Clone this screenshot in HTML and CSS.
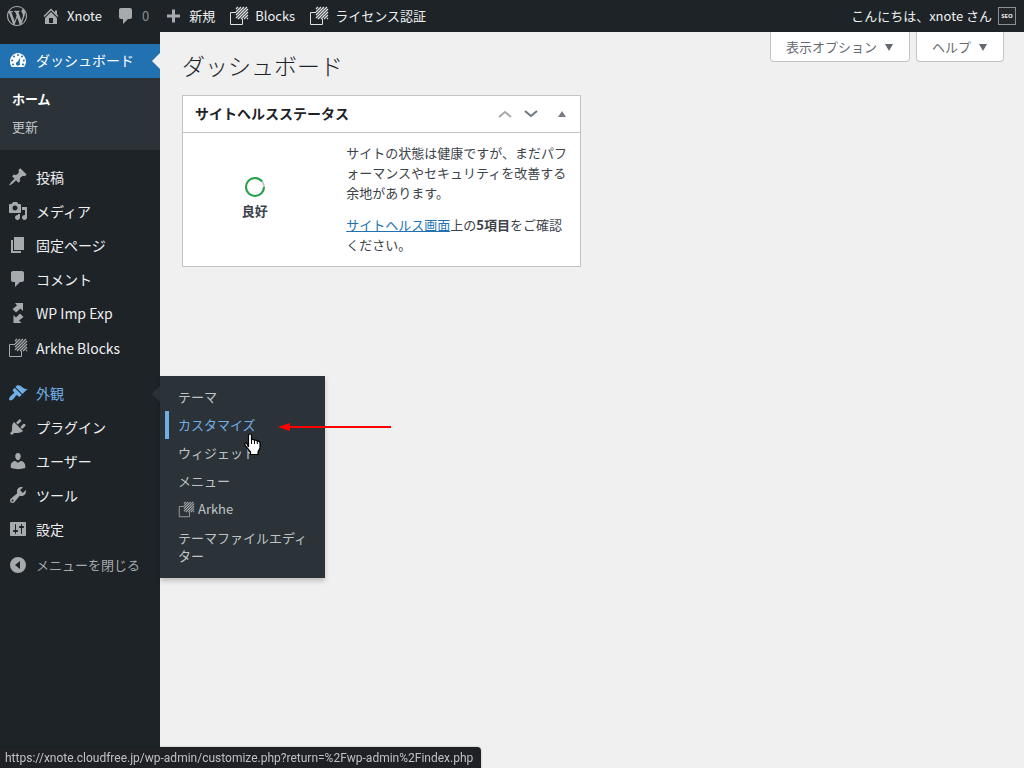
FILE: index.html
```html
<!DOCTYPE html>
<html lang="ja">
<head>
<meta charset="utf-8">
<meta name="viewport" content="width=device-width, initial-scale=1">
<title>ダッシュボード ‹ Xnote — WordPress</title>
<link rel="stylesheet" href="styles.css">
</head>
<body>
<svg class="sprite" aria-hidden="true">
  <defs>
    <symbol id="arkhe" viewBox="0 0 20 20">
      <path d="M7 6.500H1.500v12h12V13" fill="none" stroke="currentColor"/>
      <path d="M7 3l2-2M7 6l5-5M7 9l8-8M7 12L18 1M9 13L19 3M12 13l7-7M15 13l4-4M18 13l1-1" fill="none" stroke="currentColor" stroke-width="1.300"/>
    </symbol>
    <symbol id="comment" viewBox="0 0 20 20"><path d="M5 2h9c1.100 0 2 .9 2 2v7c0 1.100-.9 2-2 2h-2l-5 5v-5H5c-1.100 0-2-.9-2-2V4c0-1.100.9-2 2-2z"/></symbol>
  </defs>
</svg>

<header class="adminbar">
  <nav class="bar-group" aria-label="ツールバー">
    <a class="bar-item" href="#" aria-label="WordPress について"><svg class="icon" viewBox="0 0 20 20"><path d="M20 10c0-5.51-4.49-10-10-10C4.48 0 0 4.490 0 10c0 5.520 4.480 10 10 10 5.510 0 10-4.480 10-10zM7.780 15.370L4.370 6.220c.55-.02 1.170-.08 1.170-.08.5-.06.44-1.130-.06-1.110 0 0-1.450.11-2.370.11-.18 0-.37 0-.58-.01C4.120 2.690 6.870 1.110 10 1.110c2.330 0 4.450.87 6.050 2.340-.68-.11-1.650.39-1.650 1.580 0 .74.45 1.360.9 2.100.35.61.55 1.360.55 2.460 0 1.490-1.400 5-1.400 5l-3.030-8.370c.54-.02.82-.17.82-.17.5-.05.44-1.250-.06-1.220 0 0-1.440.12-2.380.12-.87 0-2.330-.12-2.330-.12-.5-.03-.56 1.200-.06 1.220l.92.08 1.260 3.410zM17.410 10c.24-.64.74-1.870.43-4.250.7 1.290 1.050 2.710 1.050 4.250 0 3.290-1.730 6.240-4.400 7.780.97-2.590 1.940-5.200 2.920-7.780zM6.100 18.090C3.120 16.650 1.110 13.530 1.110 10c0-1.300.23-2.480.72-3.590C3.250 10.300 4.670 14.200 6.100 18.090zm4.030-6.630l2.580 6.980c-.86.29-1.760.45-2.710.45-.79 0-1.570-.11-2.290-.33.81-2.380 1.620-4.740 2.420-7.100z"/></svg></a>
    <a class="bar-item" href="#"><svg class="icon" viewBox="0 0 20 20"><path d="M16 8.500l1.530 1.530-1.060 1.060L10 4.600l-6.470 6.490-1.060-1.060L10 2.500l4 4v-2h2v4zm-6-2.460l6 5.990V18H4v-5.970zM12 17v-5H8v5h4z" fill-rule="evenodd"/></svg>Xnote</a>
    <a class="bar-item bar-comments" href="#"><svg class="icon"><use href="#comment"/></svg>0</a>
    <a class="bar-item" href="#"><svg class="icon" viewBox="0 0 20 20"><path d="M17 8.500v3h-5v5H9v-5H4v-3h5v-5h3v5h5z"/></svg>新規</a>
    <a class="bar-item bar-light" href="#"><svg class="icon"><use href="#arkhe"/></svg>Blocks</a>
    <a class="bar-item bar-light" href="#"><svg class="icon"><use href="#arkhe"/></svg>ライセンス認証</a>
  </nav>
  <a class="bar-item account" href="#">こんにちは、xnote さん
    <svg class="avatar" viewBox="0 0 18 18"><rect x=".5" y=".5" width="17" height="17" fill="#24272a" stroke="#8c8f94"/><text x="9" y="11" text-anchor="middle">SEO</text></svg>
  </a>
</header>

<div class="layout">
  <nav class="sidebar" aria-label="メインメニュー">
    <ul class="menu">
      <li class="menu-item current">
        <a href="#"><svg class="icon" viewBox="0 0 20 20"><path fill-rule="evenodd" d="M3.760 17h12.480A9.300 9.300 0 0 0 18 11.560C18 6.840 14.420 3 10 3S2 6.840 2 11.560c0 2.020.66 3.900 1.760 5.440zM10 4a1 1 0 1 1 0 2 1 1 0 0 1 0-2zM6 5.500a1 1 0 1 1 0 2 1 1 0 0 1 0-2zm8 0a1 1 0 1 1 0 2 1 1 0 0 1 0-2zM4.200 9.500a1 1 0 1 1 0 2 1 1 0 0 1 0-2zm11.600 0a1 1 0 1 1 0 2 1 1 0 0 1 0-2zM12.300 7.500l-.6 5.200a2 2 0 1 1-2.100-.9zM5 13.500a1 1 0 1 1 0 2 1 1 0 0 1 0-2zm10 0a1 1 0 1 1 0 2 1 1 0 0 1 0-2z"/></svg>ダッシュボード</a>
        <ul class="submenu">
          <li><a class="selected" href="#">ホーム</a></li>
          <li><a href="#">更新</a></li>
        </ul>
      </li>
      <li class="separator"></li>
      <li class="menu-item"><a href="#"><svg class="icon" viewBox="0 0 20 20"><path d="M10.440 3.020l1.820-1.820 6.360 6.350-1.830 1.820c-1.050-.68-2.480-.57-3.410.36l-.75.75c-.92.93-1.040 2.350-.35 3.410l-1.830 1.820-2.410-2.410-2.800 2.790c-.42.42-3.380 2.710-3.800 2.290s1.860-3.390 2.280-3.810l2.790-2.790L4.100 9.360l1.830-1.820c1.050.69 2.480.57 3.400-.36l.75-.75c.93-.92 1.050-2.350.36-3.410z"/></svg>投稿</a></li>
      <li class="menu-item"><a href="#"><svg class="icon" viewBox="0 0 20 20"><path fill-rule="evenodd" d="M13 11V4c0-.55-.45-1-1-1h-1.670L9 1H5L3.670 3H2c-.55 0-1 .45-1 1v7c0 .55.45 1 1 1h10c.55 0 1-.45 1-1zM7 4.500c1.380 0 2.500 1.120 2.500 2.500S8.380 9.500 7 9.500 4.500 8.380 4.500 7 5.620 4.500 7 4.500zM14 6h5v10.500c0 1.380-1.120 2.500-2.500 2.500S14 17.880 14 16.500s1.120-2.500 2.500-2.500c.17 0 .34.02.5.05V9h-3V6zm-4 8.050V13h2v3.500c0 1.380-1.120 2.500-2.500 2.500S7 17.880 7 16.500 8.120 14 9.500 14c.17 0 .34.02.5.05z"/></svg>メディア</a></li>
      <li class="menu-item"><a href="#"><svg class="icon" viewBox="0 0 20 20"><path d="M6 15V2h10v13H6zm-1 1h8v2H3V5h2v11z"/></svg>固定ページ</a></li>
      <li class="menu-item"><a href="#"><svg class="icon"><use href="#comment"/></svg>コメント</a></li>
      <li class="menu-item"><a href="#"><svg class="icon" viewBox="0 0 20 20"><path d="M7 0h8v8l-2.500-2.500L8 9.500 4.500 6l4.500-3.500zM5.500 20v-8l2.500 2.500L12 10.500l3.500 3.500-4.500 3.500 2.500 2.500z"/></svg>WP Imp Exp</a></li>
      <li class="menu-item plugin-entry"><a href="#"><svg class="icon"><use href="#arkhe"/></svg>Arkhe Blocks</a></li>
      <li class="separator"></li>
      <li class="menu-item open">
        <a href="#"><svg class="icon" viewBox="0 0 20 20"><path d="M14.480 11.060L7.410 3.990l1.500-1.500c.5-.56 2.300-.47 3.510.32 1.210.8 1.430 1.280 2.910 2.100 1.180.64 2.450 1.260 4.450.85zm-.71.71L6.700 4.700 4.930 6.470c-.39.39-.39 1.020 0 1.410l1.060 1.060c.39.39.39 1.030 0 1.420-.6.6-1.430 1.110-2.210 1.690-.35.26-.7.53-1.010.84C1.430 14.230.4 16.080 1.400 17.070c.99 1 2.840-.03 4.180-1.360.31-.31.58-.66.85-1.020.57-.78 1.080-1.610 1.690-2.210.39-.39 1.020-.39 1.410 0l1.060 1.060c.39.39 1.020.39 1.410 0z"/></svg>外観</a>
        <ul class="flyout">
          <li><a href="#">テーマ</a></li>
          <li><a class="hovered" href="#">カスタマイズ</a></li>
          <li><a href="#">ウィジェット</a></li>
          <li><a href="#">メニュー</a></li>
          <li><a class="with-icon" href="#"><svg class="icon-small"><use href="#arkhe"/></svg>Arkhe</a></li>
          <li class="plugin-entry"><a href="#">テーマファイルエディター</a></li>
        </ul>
        <svg class="arrow" viewBox="0 0 114 10" aria-hidden="true"><path d="M10 5h103" stroke="#f00" stroke-width="2"/><path d="M0 5l12-4v8z" fill="#f00"/></svg>
        <svg class="pointer" viewBox="0 0 18 23" aria-hidden="true"><path d="M4.500 14V2.500C4.500.5 7.500.5 7.500 2.500V7c.5-1 2.500-.8 3 .6.8-.9 2.400-.5 2.800.8 1.200-.7 2.700 0 2.700 1.800V15l-2 4v2.500H6.500V19L2 13.500C.2 11.500.8 9.600 2.600 10z" fill="#fff" stroke="#000" stroke-width="1.200"/><path d="M7.500 7v4M10.500 8v3M13.300 8.800V11" stroke="#000"/></svg>
      </li>
      <li class="menu-item"><a href="#"><svg class="icon" viewBox="0 0 20 20"><path d="M13.110 4.360L9.870 7.600 8 5.730l3.240-3.240c.35-.34 1.050-.2 1.560.32.52.51.66 1.210.31 1.550zm-8 1.770l.91-1.120 9.010 9.010-1.190.84c-.71.71-2.630 1.160-3.820 1.160H6.140L4.900 17.260c-.59.59-1.540.59-2.120 0-.59-.58-.59-1.530 0-2.120l1.240-1.240v-3.880c0-1.130.4-3.190 1.090-3.890zm7.260 3.970l3.240-3.240c.34-.35 1.040-.21 1.550.31.52.51.66 1.210.31 1.550l-3.240 3.250z"/></svg>プラグイン</a></li>
      <li class="menu-item"><a href="#"><svg class="icon" viewBox="0 0 20 20"><path d="M10 9.250c-2.270 0-2.730-3.440-2.730-3.440C7 4.020 7.820 2 9.970 2c2.160 0 2.980 2.020 2.710 3.810 0 0-.41 3.440-2.680 3.440zm0 2.570L12.720 10c2.390 0 4.520 2.330 4.520 4.530v2.490s-3.650 1.130-7.240 1.130c-3.650 0-7.240-1.130-7.240-1.130v-2.490c0-2.250 1.940-4.480 4.470-4.480z"/></svg>ユーザー</a></li>
      <li class="menu-item"><a href="#"><svg class="icon" viewBox="0 0 20 20"><path fill-rule="evenodd" d="M16.680 9.770c-1.340 1.340-3.300 1.670-4.950.99l-5.410 6.520c-.99.99-2.590.99-3.580 0s-.99-2.590 0-3.570l6.520-5.420c-.68-1.650-.35-3.610.99-4.950 1.280-1.280 3.120-1.620 4.720-1.060l-2.890 2.890 2.820 2.820 2.860-2.870c.53 1.580.18 3.390-1.080 4.650zM3.810 16.210c.4.39 1.040.39 1.430 0 .4-.4.4-1.040 0-1.430-.39-.4-1.030-.4-1.430 0-.39.39-.39 1.030 0 1.430z"/></svg>ツール</a></li>
      <li class="menu-item"><a href="#"><svg class="icon" viewBox="0 0 20 20"><path fill-rule="evenodd" d="M18 16V4c0-.55-.45-1-1-1H3c-.55 0-1 .45-1 1v12c0 .55.45 1 1 1h14c.55 0 1-.45 1-1zM8 11h1c.55 0 1 .45 1 1s-.45 1-1 1H8v1.500c0 .28-.22.5-.5.5s-.5-.22-.5-.5V13H6c-.55 0-1-.45-1-1s.45-1 1-1h1V5.500c0-.28.22-.5.5-.5s.5.22.5.5V11zm5-2h-1c-.55 0-1-.45-1-1s.45-1 1-1h1V5.500c0-.28.22-.5.5-.5s.5.22.5.5V7h1c.55 0 1 .45 1 1s-.45 1-1 1h-1v5.500c0 .28-.22.5-.5.5s-.5-.22-.5-.5V9z"/></svg>設定</a></li>
    </ul>
    <button class="collapse" type="button"><svg class="icon" viewBox="0 0 20 20"><path fill-rule="evenodd" d="M10 2a8 8 0 1 0 0 16 8 8 0 0 0 0-16zm2 4v8l-5-4z"/></svg>メニューを閉じる</button>
  </nav>

  <main class="content">
    <div class="screen-links">
      <button type="button">表示オプション<svg class="caret" viewBox="0 0 10 8"><path d="M1 1h8L5 8z"/></svg></button>
      <button type="button">ヘルプ<svg class="caret" viewBox="0 0 10 8"><path d="M1 1h8L5 8z"/></svg></button>
    </div>
    <h1>ダッシュボード</h1>
    <div class="widgets">
      <section class="postbox">
        <header class="postbox-header">
          <h2>サイトヘルスステータス</h2>
          <div class="handles">
            <button class="disabled" type="button" aria-label="上に移動"><svg viewBox="0 0 14 8"><path d="M1 7l6-5 6 5"/></svg></button>
            <button class="down" type="button" aria-label="下に移動"><svg viewBox="0 0 14 8"><path d="M1 1l6 5 6-5"/></svg></button>
            <button class="toggle" type="button" aria-label="パネルを閉じる"><svg viewBox="0 0 8 6"><path d="M4 0l4 6H0z"/></svg></button>
          </div>
        </header>
        <div class="health">
          <div class="status">
            <svg class="ring" viewBox="0 0 20 20"><circle cx="10" cy="10" r="9" stroke="#c3c4c7"/><circle cx="10" cy="10" r="9" stroke="#1fa345" stroke-dasharray="50 57"/></svg>
            <strong>良好</strong>
          </div>
          <div class="details">
            <p>サイトの状態は健康ですが、まだパフォーマンスやセキュリティを改善する余地があります。</p>
            <p><a href="#">サイトヘルス画面</a>上の<strong>5項目</strong>をご確認ください。</p>
          </div>
        </div>
      </section>
    </div>
  </main>
</div>
<div class="statusbar">https://xnote.cloudfree.jp/wp-admin/customize.php?return=%2Fwp-admin%2Findex.php</div>
</body>
</html>
```

FILE: styles.css
```css
* { box-sizing: border-box; }

body {
  margin: 0;
  min-height: 100vh;
  display: flex;
  flex-direction: column;
  background: #f0f0f1;
  color: #3c434a;
  font: 13px/20px "Noto Sans CJK JP", sans-serif;
}

a { color: #2271b1; }
ul { margin: 0; padding: 0; list-style: none; }
button { font: inherit; cursor: pointer; }
svg { display: block; flex: none; }
.sprite { position: absolute; width: 0; height: 0; }
.icon { width: 20px; height: 20px; fill: currentColor; color: #a7aaad; }

.adminbar {
  height: 32px;
  display: flex;
  justify-content: space-between;
  background: #1d2327;
}
.bar-group { display: flex; }
.bar-item {
  display: flex;
  align-items: center;
  gap: 6px;
  padding: 0 7px;
  color: #f0f0f1;
  text-decoration: none;
  white-space: nowrap;
}
.account { padding-right: 8px; }
.bar-comments { color: #8c8f94; }
.bar-light .icon { color: #e0e1e2; }
.avatar { width: 18px; height: 18px; }
.avatar text { font: bold 6px "Open Sans", sans-serif; fill: #f0f0f1; }

.layout { flex: 1; display: flex; }

.sidebar {
  width: 160px;
  flex: none;
  padding-top: 12px;
  background: #1d2327;
  font-size: 14px;
}
.menu-item { position: relative; }
.menu-item > a {
  height: 34px;
  display: flex;
  align-items: center;
  gap: 8px;
  padding: 0 8px 2px;
  color: #f0f0f1;
  text-decoration: none;
}
.plugin-entry { padding-top: 1px; }
.separator { height: 11px; }
.current > a { background: #2271b1; color: #fff; }
.current > a .icon { color: #fff; }
.current > a::after,
.open > a::after {
  content: "";
  position: absolute;
  right: 0;
  top: 9px;
  border: 8px solid transparent;
  border-left: 0;
  border-right-color: #f0f0f1;
}
.open > a::after { border-right-color: #2c3338; }
.open > a, .open > a .icon { color: #72aee6; }

.submenu { padding: 7px 0 9px; background: #2c3338; }
.submenu a, .flyout a {
  display: block;
  padding: 5px 12px;
  color: #bfc3c6;
  font-size: 13px;
  line-height: 18px;
  text-decoration: none;
}
.submenu .selected { color: #fff; font-weight: 600; }

.flyout {
  position: absolute;
  top: -1px;
  left: 160px;
  width: 165px;
  z-index: 2;
  padding: 7px 0 8px;
  background: #2c3338;
  box-shadow: 0 3px 5px rgba(0, 0, 0, .2);
}
.flyout a { padding: 5px 14px; border-left: 4px solid transparent; }
.flyout .hovered { color: #72aee6; box-shadow: inset 1px 0 #2c3338, inset 5px 0 #72aee6; }
.flyout .with-icon { display: flex; align-items: center; gap: 3px; }
.icon-small { width: 17px; height: 17px; color: #a7aaad; }
.arrow { position: absolute; z-index: 3; left: 278px; top: 45px; width: 114px; height: 10px; }
.pointer { position: absolute; z-index: 3; left: 244px; top: 56px; width: 18px; height: 23px; }

.collapse {
  width: 100%;
  height: 34px;
  display: flex;
  align-items: center;
  gap: 8px;
  margin-top: 1px;
  padding: 0 8px;
  border: 0;
  background: none;
  color: #a7aaad;
  font-size: 13px;
}

.content { flex: 1; min-width: 0; padding: 0 20px 0 22px; }
.screen-links { display: flex; justify-content: flex-end; gap: 6px; height: 0; }
.screen-links button {
  height: 30px;
  display: flex;
  align-items: center;
  gap: 7px;
  padding: 0 15px;
  border: 1px solid #c3c4c7;
  border-top: 0;
  border-radius: 0 0 4px 4px;
  background: #fff;
  color: #646970;
}
.caret { width: 10px; height: 8px; fill: #646970; }

h1 {
  margin: 0;
  padding: 18px 0 15px;
  color: #1d2327;
  font-size: 23px;
  font-weight: 300;
  line-height: 30px;
}

.widgets { display: grid; grid-template-columns: 1fr 1fr; gap: 24px; }
.postbox { border: 1px solid #c3c4c7; background: #fff; }
.postbox-header {
  display: flex;
  align-items: center;
  justify-content: space-between;
  height: 37px;
  padding: 0 12px;
  border-bottom: 1px solid #c3c4c7;
}
h2 { margin: 0; padding-bottom: 2px; color: #1d2327; font-size: 14px; font-weight: 600; line-height: 20px; }
.handles { display: flex; align-items: center; gap: 12px; }
.handles button { display: flex; padding: 0; border: 0; background: none; }
.handles svg { width: 14px; height: 8px; fill: none; stroke-width: 2; }
.handles .disabled svg { stroke: #a7aaad; }
.handles .down svg { stroke: #6c7781; }
.handles .toggle { padding: 0 2px 0 8px; }
.handles .toggle svg { width: 8px; height: 6px; fill: #787c82; stroke: none; }

.health {
  display: grid;
  grid-template-columns: 32% 60%;
  justify-content: space-between;
  align-items: center;
  padding: 10px 12px 11px;
}
.status { display: flex; flex-direction: column; align-items: center; gap: 4px; }
.status strong, .details strong { font-weight: 600; }
.ring { width: 20px; height: 20px; fill: none; stroke-width: 2; }
.details { padding-left: 2px; }
.details p { margin: 0; }
.details p + p { margin-top: 12px; }

.statusbar {
  position: fixed;
  left: 0;
  bottom: 0;
  padding: 1px 8px 0 5px;
  border-radius: 0 4px 0 0;
  background: #202124;
  color: #bdc1c6;
  font-family: Roboto, sans-serif;
  font-size: 12px;
  box-shadow: 0 0 2px rgba(0, 0, 0, .3);
}
```
